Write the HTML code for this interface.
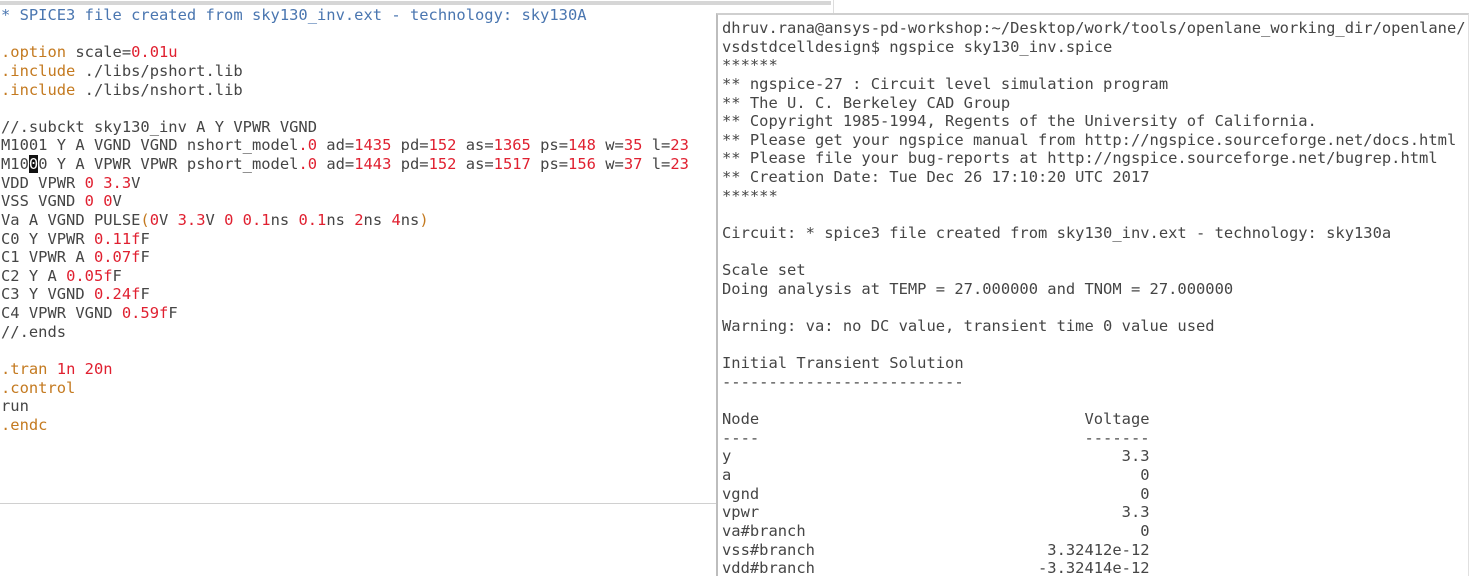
<!DOCTYPE html>
<html><head><style>
body{margin:0;width:1471px;height:584px;background:#fff;position:relative;overflow:hidden;font-family:"DejaVu Sans Mono","Liberation Mono",monospace;font-size:15.45px;color:#454545}
pre{margin:0;font:inherit;line-height:18.63px;white-space:pre;position:absolute}
.c{color:#4a76b0}.o{color:#c47a20}.r{color:#e02030}
.cur{background:#111;color:#fff}
</style></head><body>
<div style="position:absolute;left:0;top:1px;width:831px;height:4px;background:#d6d6d6"></div>
<div style="position:absolute;left:833px;top:0;width:1px;height:14px;background:#ddd"></div>
<div style="position:absolute;left:0;top:503px;width:718px;height:1px;background:#d0d0d0"></div>
<pre style="left:1px;top:6px"><span class="c">* SPICE3 file created from sky130_inv.ext - technology: sky130A</span>

<span class="o">.option</span> scale=<span class="r">0.01u</span>
<span class="o">.include</span> ./libs/pshort.lib
<span class="o">.include</span> ./libs/nshort.lib

//.subckt sky130_inv A Y VPWR VGND
M1001 Y A VGND VGND nshort_model<span class="r">.0</span> ad=<span class="r">1435</span> pd=<span class="r">152</span> as=<span class="r">1365</span> ps=<span class="r">148</span> w=<span class="r">35</span> l=<span class="r">23</span>
M10<span class="cur">0</span>0 Y A VPWR VPWR pshort_model<span class="r">.0</span> ad=<span class="r">1443</span> pd=<span class="r">152</span> as=<span class="r">1517</span> ps=<span class="r">156</span> w=<span class="r">37</span> l=<span class="r">23</span>
VDD VPWR <span class="r">0 3.3</span>V
VSS VGND <span class="r">0 0</span>V
Va A VGND PULSE<span class="o">(</span><span class="r">0</span>V <span class="r">3.3</span>V <span class="r">0 0.1</span>ns <span class="r">0.1</span>ns <span class="r">2</span>ns <span class="r">4</span>ns<span class="o">)</span>
C0 Y VPWR <span class="r">0.11f</span>F
C1 VPWR A <span class="r">0.07f</span>F
C2 Y A <span class="r">0.05f</span>F
C3 Y VGND <span class="r">0.24f</span>F
C4 VPWR VGND <span class="r">0.59f</span>F
//.ends

<span class="o">.tran</span> <span class="r">1n 20n</span>
<span class="o">.control</span>
run
<span class="o">.endc</span></pre>
<div style="position:absolute;left:716px;top:13px;width:750px;height:561px;background:#fff;border-top:2px solid #cfcfcf;border-left:2px solid #bdbdbd;border-right:1px solid #e0e0e0"></div>
<pre style="left:722px;top:19px">dhruv.rana@ansys-pd-workshop:~/Desktop/work/tools/openlane_working_dir/openlane/
vsdstdcelldesign$ ngspice sky130_inv.spice
******
** ngspice-27 : Circuit level simulation program
** The U. C. Berkeley CAD Group
** Copyright 1985-1994, Regents of the University of California.
** Please get your ngspice manual from http://ngspice.sourceforge.net/docs.html
** Please file your bug-reports at http://ngspice.sourceforge.net/bugrep.html
** Creation Date: Tue Dec 26 17:10:20 UTC 2017
******

Circuit: * spice3 file created from sky130_inv.ext - technology: sky130a

Scale set
Doing analysis at TEMP = 27.000000 and TNOM = 27.000000

Warning: va: no DC value, transient time 0 value used

Initial Transient Solution
--------------------------

Node                                   Voltage
----                                   -------
y                                          3.3
a                                            0
vgnd                                         0
vpwr                                       3.3
va#branch                                    0
vss#branch                         3.32412e-12
vdd#branch                        -3.32414e-12</pre>
</body></html>
